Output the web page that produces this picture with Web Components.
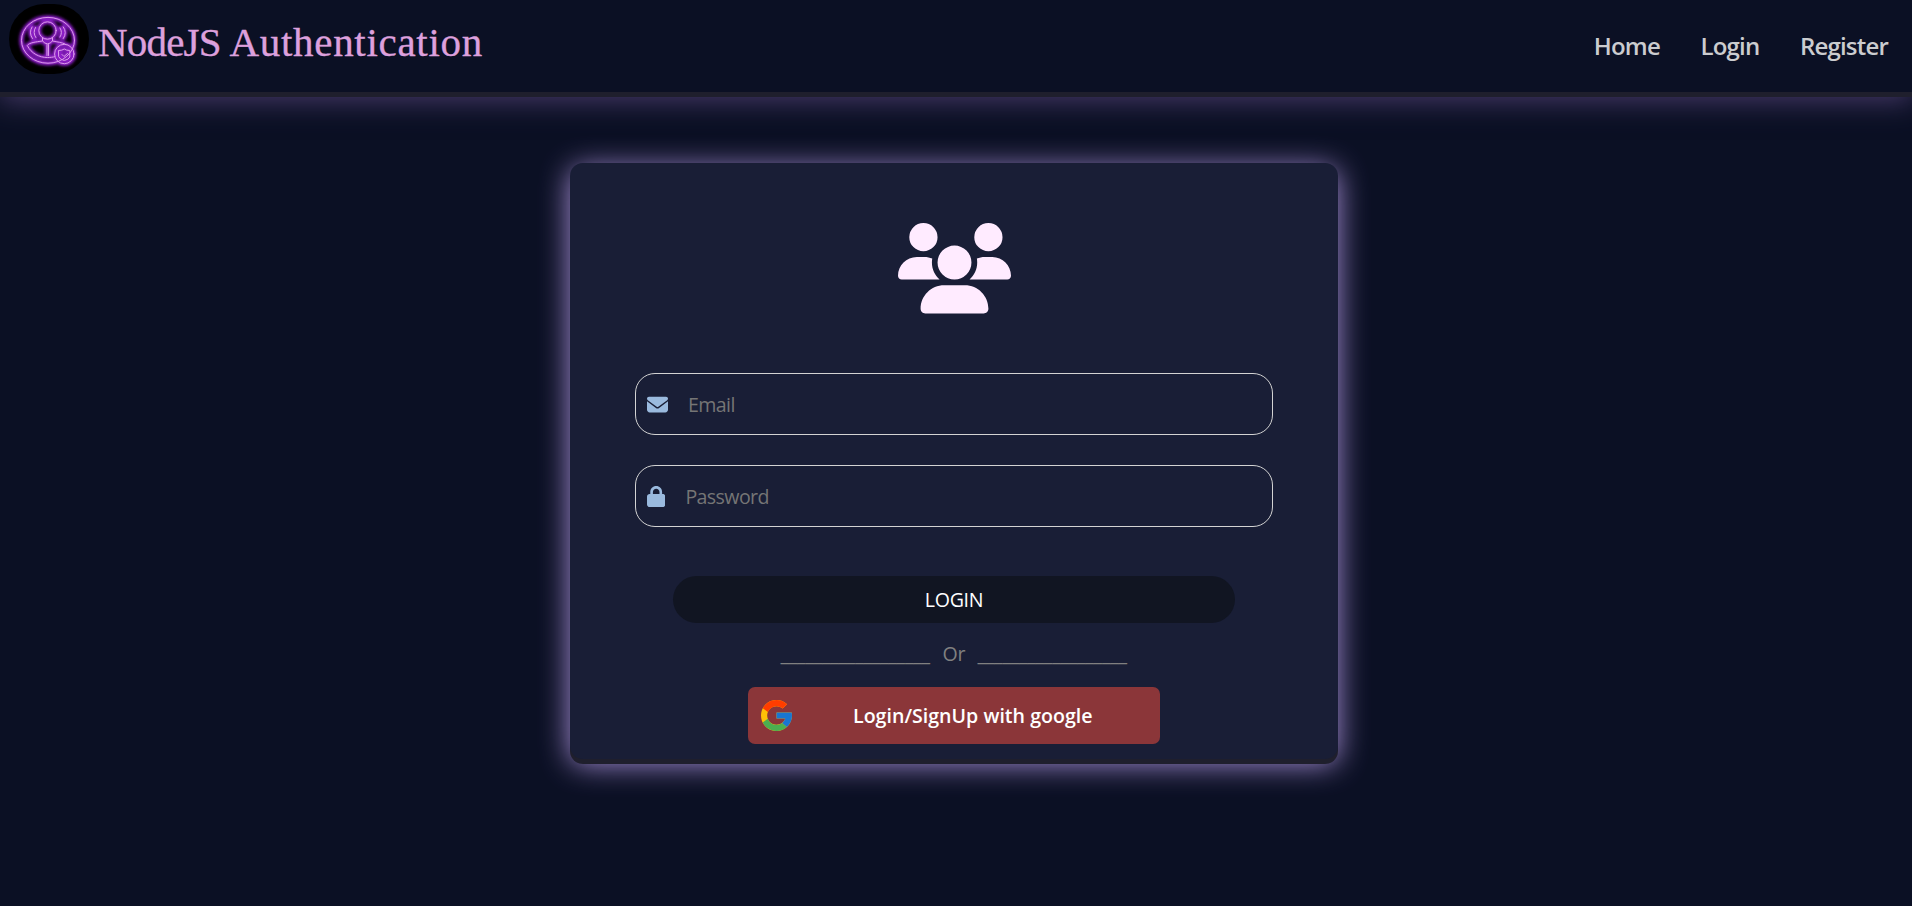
<!DOCTYPE html>
<html lang="en">
<head>
<meta charset="utf-8">
<title>NodeJS Authentication</title>
<style>
html,body{margin:0;height:100%}
body{background:#0b1024;font-family:"Open Sans","Noto Sans",sans-serif;overflow:hidden}
</style>
</head>
<body>
<auth-page></auth-page>
<script>
const define = (name, html) => customElements.define(name, class extends HTMLElement {
  constructor() {
    super();
    this.attachShadow({ mode: 'open' }).innerHTML = html;
  }
});

define('brand-logo', `
<style>:host{display:block;width:80px;height:70px;flex:none}svg{display:block}</style>
<svg width="80" height="70" viewBox="9 4 80 70">
  <defs><filter id="g" x="-30%" y="-30%" width="160%" height="160%"><feGaussianBlur stdDeviation="1.7"/></filter>
  <g id="s" fill="none" stroke-linecap="round" stroke-linejoin="round">
    <ellipse cx="48" cy="40.300" rx="26.500" ry="22.900"/>
    <circle cx="47.500" cy="30.500" r="8.700"/>
    <path d="M42.500 38v3c-7 1-13 1.500-15.200 4.500c4 8 12 12 20.200 12c3 0 5.500-.3 7-.8M52.500 38v3c5 1 9.500 1.500 12.500 3M42.500 41q5 6 10 0M47 44.500v11M48.500 44.500v11"/>
    <path d="M35.500 27.500q-3 5 .3 10M32 27q-3.500 6 .5 11.500M60 28q3 4.500 0 9M63.300 27q4 5.500 0 11.500"/>
    <circle cx="64.300" cy="54" r="9.700"/>
    <path d="M58.800 50.500q3.500 0 5.500-1.500q2 1.500 5.500 1.500v6.500q-1 2.500-5.500 3.500q-4.500-1-5.500-3.500zM62 54.500l2 2l3.500-3"/>
  </g></defs>
  <rect x="9" y="4" width="80" height="70" rx="35"/>
  <use href="#s" stroke="#8a1cc8" stroke-width="4.500" filter="url(#g)"/>
  <use href="#s" stroke="#8a25b8" stroke-width="2.400" opacity=".7"/>
  <use href="#s" stroke="#dc9aee" stroke-width="1"/>
</svg>`);

define('nav-link', `
<style>:host{display:block;color:#cbcccf;font-size:24px;font-weight:600;line-height:32px;letter-spacing:-.8px}</style><slot></slot>`);

define('site-header', `
<style>
:host{display:flex;box-sizing:border-box;height:92px;padding:4px 24px 0 9px;box-shadow:0 5px 0 #1f1f2d,0 9px 26px #463967}
.title{color:#dda0dd;font:41px/52px "Liberation Serif",serif;letter-spacing:.7px;-webkit-text-stroke:.35px #dda0dd;margin:12px 0 0 9px;white-space:nowrap}
.title span{letter-spacing:-.8px}
nav{display:flex;gap:40.500px;margin:26px 0 0 auto}
</style>
<brand-logo></brand-logo><div class="title"><span>NodeJS</span> Authentication</div>
<nav><nav-link>Home</nav-link><nav-link>Login</nav-link><nav-link>Register</nav-link></nav>`);

define('users-icon', `
<style>:host{display:block;width:113px;height:90.500px}svg{display:block;width:100%;height:100%}</style>
<svg viewBox="0 0 640 512" preserveAspectRatio="xMinYMin" fill="#ffebff"><path d="M144 0a80 80 0 1 1 0 160A80 80 0 1 1 144 0zM512 0a80 80 0 1 1 0 160A80 80 0 1 1 512 0zM0 298.700C0 239.800 47.800 192 106.700 192h42.700c15.900 0 31 3.500 44.600 9.700c-1.300 7.200-1.900 14.700-1.900 22.300c0 38.200 16.800 72.500 43.300 96H21.300C9.600 320 0 310.400 0 298.700zM405.300 320c26.600-23.500 43.300-57.800 43.300-96c0-7.600-.7-15-1.900-22.300c13.600-6.300 28.700-9.700 44.600-9.700h42.700C592.200 192 640 239.800 640 298.700c0 11.800-9.600 21.300-21.300 21.300H405.300zM224 224a96 96 0 1 1 192 0 96 96 0 1 1 -192 0zM128 485.300C128 411.700 187.700 352 261.300 352H378.700C452.300 352 512 411.700 512 485.300c0 14.700-11.900 26.700-26.700 26.700H154.700c-14.700 0-26.700-11.900-26.700-26.700z"/></svg>`);

customElements.define('auth-field', class extends HTMLElement {
  connectedCallback() {
    const type = this.getAttribute('type'), label = this.getAttribute('label');
    const icon = type === 'email'
      ? '<svg width="21" height="21" viewBox="0 0 512 512"><path d="M48 64C21.500 64 0 85.500 0 112c0 15.100 7.100 29.300 19.200 38.400L236.800 313.600c11.400 8.500 27 8.500 38.400 0L492.800 150.400c12.100-9.100 19.200-23.300 19.200-38.400c0-26.500-21.500-48-48-48H48zM0 176V384c0 35.300 28.700 64 64 64H448c35.300 0 64-28.700 64-64V176L294.400 339.200c-22.800 17.100-54 17.100-76.800 0L0 176z"/></svg>'
      : '<svg width="18.400" height="21" viewBox="0 0 448 512"><path d="M144 144v48H304V144c0-44.200-35.800-80-80-80s-80 35.800-80 80zM80 192V144C80 64.500 144.500 0 224 0s144 64.500 144 144v48h16c35.300 0 64 28.700 64 64V448c0 35.300-28.700 64-64 64H64c-35.300 0-64-28.700-64-64V256c0-35.300 28.700-64 64-64H80z"/></svg>';
    this.attachShadow({ mode: 'open' }).innerHTML = `
<style>
:host{display:flex;align-items:center;box-sizing:border-box;width:638px;height:62px;border:1px solid #d3d3d3;border-radius:20px;padding-left:11px}
svg{display:block;flex:none;fill:#9abade}
input{flex:1;min-width:0;margin:2px 10px 0 20px;padding:0;border:0;outline:0;background:none;color:#fff;font:19.600px/28px "Open Sans",sans-serif;letter-spacing:-.6px}
input::placeholder{color:#757575;opacity:1}
</style>${icon}<input type="${type}" placeholder="${label}" aria-label="${label}">`;
  }
});

define('login-button', `
<style>:host{display:block}
button{display:block;width:562px;height:47px;padding:0;border:0;border-radius:24px;background:#111522;color:#fff;font:19.600px/47px "Open Sans",sans-serif;letter-spacing:-.3px}</style>
<button><slot></slot></button>`);

define('or-divider', `
<style>:host{display:flex;justify-content:center;color:#808080;font-size:19.600px;line-height:28px;white-space:nowrap}
.line{width:150px;letter-spacing:-.29px}.word{width:47px;text-align:center}</style>
<span class="line">__________________</span><span class="word"><slot></slot></span><span class="line">__________________</span>`);

define('google-button', `
<style>
:host{display:block}
button{display:flex;align-items:center;width:412px;height:57px;padding:0 0 0 13px;border:0;border-radius:7px;background:#8b3639;color:#fff;font:600 19.600px/28px "Open Sans",sans-serif}
svg{flex:none}span{margin:1px 0 0 61px;white-space:nowrap}
</style>
<button><svg width="31" height="31" viewBox="4 4 40 40">
<path fill="#FFC107" d="M43.611 20.083H42V20H24v8h11.303c-1.649 4.657-6.080 8-11.303 8c-6.627 0-12-5.373-12-12s5.373-12 12-12c3.059 0 5.842 1.154 7.961 3.039l5.657-5.657C34.046 6.053 29.268 4 24 4C12.955 4 4 12.955 4 24s8.955 20 20 20s20-8.955 20-20c0-1.341-.138-2.650-.389-3.917z"/>
<path fill="#FF3D00" d="M6.306 14.691l6.571 4.819C14.655 15.108 18.961 12 24 12c3.059 0 5.842 1.154 7.961 3.039l5.657-5.657C34.046 6.053 29.268 4 24 4C16.318 4 9.656 8.337 6.306 14.691z"/>
<path fill="#4CAF50" d="M24 44c5.166 0 9.860-1.977 13.409-5.192l-6.190-5.238C29.211 35.091 26.715 36 24 36c-5.202 0-9.619-3.317-11.283-7.946l-6.522 5.025C9.505 39.556 16.227 44 24 44z"/>
<path fill="#1976D2" d="M43.611 20.083H42V20H24v8h11.303c-.792 2.237-2.231 4.166-4.087 5.571l6.193 5.238C36.971 39.205 44 34 44 24c0-1.341-.138-2.650-.389-3.917z"/>
</svg><span><slot></slot></span></button>`);

define('login-card', `
<style>
:host{display:flex;flex-direction:column;align-items:center;box-sizing:border-box;width:768px;height:596px;padding-top:60px;border-radius:13px;background:#191e36;box-shadow:0 5px 0 #1f1f2d,0 5px 30px #ab92da}
form{display:flex;flex-direction:column;align-items:center;margin:0}
.fields{display:grid;gap:30px;margin-top:59.500px}
login-button{margin-top:49px}or-divider{margin-top:17px}google-button{margin-top:19px}
</style>
<users-icon></users-icon>
<form onsubmit="return false"><div class="fields"><auth-field type="email" label="Email"></auth-field><auth-field type="password" label="Password"></auth-field></div>
<login-button>LOGIN</login-button><or-divider>Or</or-divider><google-button>Login/SignUp with google</google-button></form>`);

define('auth-page', `
<style>:host{display:block;height:100%}main{display:flex;justify-content:center;padding:71px 4px 0 0}</style>
<site-header></site-header><main><login-card></login-card></main>`);
</script>
</body>
</html>
